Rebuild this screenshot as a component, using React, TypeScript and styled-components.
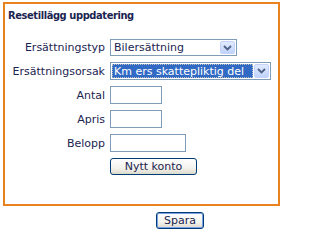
import * as React from 'react';
import styled, { createGlobalStyle } from 'styled-components';

const GlobalStyle = createGlobalStyle`
  html, body {
    margin: 0;
    padding: 0;
    background: #ffffff;
  }
  body {
    font-family: Verdana, "DejaVu Sans", sans-serif;
    color: #1b2451;
  }
`;

const Page = styled.div`
  width: 282px;
  height: 231px;
  padding: 2px 0 0 3px;
  box-sizing: border-box;
`;

const Frame = styled.div`
  width: 277px;
  height: 204px;
  box-sizing: border-box;
  border: 2px solid #e8821e;
  padding: 5px 0 0 3px;
`;

const Title = styled.div`
  font-family: "DejaVu Sans Condensed", "DejaVu Sans", sans-serif;
  font-size: 11px;
  font-weight: bold;
  letter-spacing: -0.4px;
  line-height: 14px;
  color: #1b2451;
`;

const FormGrid = styled.div`
  display: grid;
  grid-template-columns: 97px auto;
  column-gap: 5px;
  row-gap: 6px;
  margin-top: 16px;
  align-items: center;
`;

const Label = styled.div`
  justify-self: end;
  font-size: 11px;
  line-height: 13px;
  color: #1b2451;
  white-space: nowrap;
`;

const SelectBox = styled.div<{ $width: number; $height: number }>`
  width: ${p => p.$width}px;
  height: ${p => p.$height}px;
  box-sizing: border-box;
  border: 1px solid #7f9db9;
  background: #fff;
  display: flex;
  align-items: stretch;
  padding: 1px;
`;

const SelectValue = styled.div<{ $selected?: boolean }>`
  flex: 1;
  display: flex;
  align-items: center;
  font-size: 11px;
  white-space: nowrap;
  overflow: hidden;
  padding-left: 2px;
  margin-right: 1px;
  color: ${p => (p.$selected ? '#ffffff' : '#1b2451')};
  background: ${p => (p.$selected ? '#316ac5' : 'transparent')};
  outline: ${p => (p.$selected ? '1px dotted #c0c0c0' : 'none')};
  outline-offset: -1px;
`;

const ArrowButton = styled.div`
  width: 15px;
  box-sizing: border-box;
  border: 1px solid #c3d3fd;
  border-radius: 2px;
  background: linear-gradient(180deg, #e1eafe 0%, #c1d3fb 100%);
  display: flex;
  align-items: center;
  justify-content: center;
`;

const TextInput = styled.div<{ $width: number }>`
  width: ${p => p.$width}px;
  height: 18px;
  box-sizing: border-box;
  border: 1px solid #7f9db9;
  background: #fff;
`;

const Button = styled.button<{ $width: number; $default?: boolean }>`
  width: ${p => p.$width}px;
  height: 17px;
  box-sizing: border-box;
  padding: 0;
  border: 1px solid #003c74;
  border-radius: 3px;
  background: linear-gradient(180deg, #ffffff 0%, #f4f3ee 60%, #dcd9cc 100%);
  box-shadow: ${p => (p.$default ? 'inset 0 0 0 1px #7aa0e6' : 'none')};
  font-family: Verdana, "DejaVu Sans", sans-serif;
  font-size: 11px;
  line-height: 13px;
  color: #1b2451;
`;

const Footer = styled.div`
  padding: 3px 0 0 153px;
`;

const Chevron: React.FC = () => (
  <svg width="9" height="6" viewBox="0 0 9 6">
    <path d="M1 1 L4.5 4.5 L8 1" fill="none" stroke="#4d6185" strokeWidth="1.8" />
  </svg>
);

const App: React.FC = () => (
  <Page>
    <GlobalStyle />
    <Frame>
      <Title>Resetillägg uppdatering</Title>
      <FormGrid>
        <Label>Ersättningstyp</Label>
        <SelectBox $width={127} $height={17}>
          <SelectValue>Bilersättning</SelectValue>
          <ArrowButton><Chevron /></ArrowButton>
        </SelectBox>

        <Label>Ersättningsorsak</Label>
        <SelectBox $width={161} $height={18}>
          <SelectValue $selected>Km ers skattepliktig del</SelectValue>
          <ArrowButton><Chevron /></ArrowButton>
        </SelectBox>

        <Label>Antal</Label>
        <TextInput $width={52} />

        <Label>Apris</Label>
        <TextInput $width={52} />

        <Label>Belopp</Label>
        <TextInput $width={76} />

        <span />
        <Button $width={87}>Nytt konto</Button>
      </FormGrid>
    </Frame>
    <Footer>
      <Button $width={48} $default>Spara</Button>
    </Footer>
  </Page>
);

export default App;
